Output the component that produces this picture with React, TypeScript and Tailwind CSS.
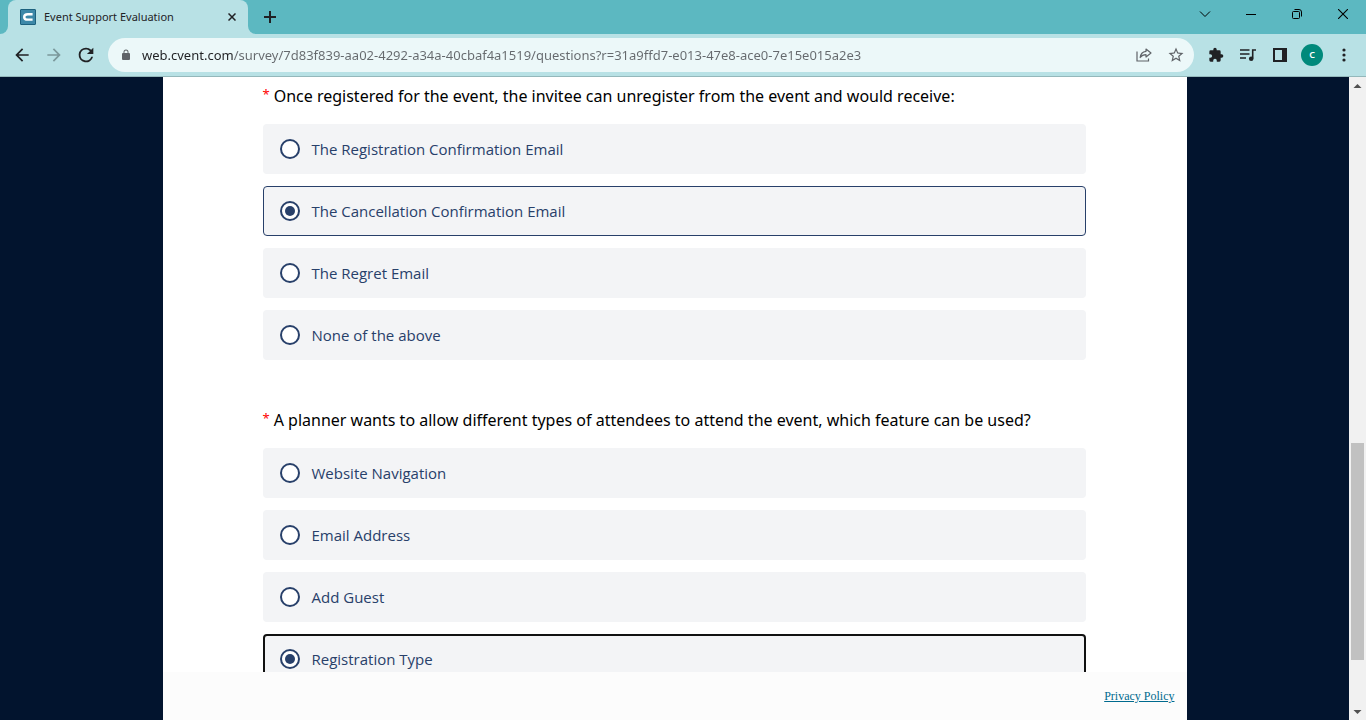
import React from "react";

type Question = {
  id: string;
  title: string;
  options: string[];
  selected: number;
  focused?: boolean;
};

const questions: Question[] = [
  {
    id: "unregister",
    title: "Once registered for the event, the invitee can unregister from the event and would receive:",
    options: [
      "The Registration Confirmation Email",
      "The Cancellation Confirmation Email",
      "The Regret Email",
      "None of the above",
    ],
    selected: 1,
  },
  {
    id: "attendee-types",
    title: "A planner wants to allow different types of attendees to attend the event, which feature can be used?",
    options: ["Website Navigation", "Email Address", "Add Guest", "Registration Type"],
    selected: 3,
    focused: true,
  },
];

function Icon({ d, className = "size-5" }: { d: string; className?: string }) {
  return (
    <svg viewBox="0 0 24 24" fill="currentColor" className={className} aria-hidden="true">
      <path d={d} />
    </svg>
  );
}

function ChromeButton({ label, className = "", children }: { label: string; className?: string; children: React.ReactNode }) {
  return (
    <button type="button" aria-label={label} className={`flex h-8 w-8 shrink-0 items-center justify-center ${className}`}>
      {children}
    </button>
  );
}

function TabStrip() {
  return (
    <div className="flex h-[34px] shrink-0 items-stretch bg-[#5cb8c1]">
      <div className="flex w-2 items-end bg-[#b8e1e5]">
        <div className="h-full w-full rounded-br-lg bg-[#5cb8c1]" />
      </div>
      <div className="flex w-60 items-center rounded-t-lg bg-[#b8e1e5] pr-2 pl-3">
        <svg viewBox="0 0 16 16" className="size-4 shrink-0" aria-hidden="true">
          <rect x="0.5" y="0.5" width="15" height="15" rx="0.5" fill="#3d88a8" stroke="#1d617e" />
          <path d="M12.6 5.2H7.8C5.6 5.2 4.200 6.200 4.200 7.900s1.400 2.700 3.600 2.700h4.800" fill="none" stroke="#fff" strokeWidth="2.400" />
        </svg>
        <span className="ml-2 flex-1 whitespace-nowrap text-[11px] leading-4 text-[#1f2326]">Event Support Evaluation</span>
        <button type="button" aria-label="Close tab" className="flex size-4 items-center justify-center text-[#202124]">
          <svg viewBox="0 0 8 8" className="size-2" aria-hidden="true">
            <path d="M.5.5l7 7M7.5.5l-7 7" stroke="currentColor" strokeWidth="1.5" />
          </svg>
        </button>
      </div>
      <div className="flex w-2 items-end bg-[#b8e1e5]">
        <div className="h-full w-full rounded-bl-lg bg-[#5cb8c1]" />
      </div>
      <button type="button" aria-label="New tab" className="flex w-7 items-center justify-center text-[#202124]">
        <svg viewBox="0 0 12 12" className="size-3" aria-hidden="true">
          <path d="M6 0v12M0 6h12" stroke="currentColor" strokeWidth="2" />
        </svg>
      </button>
      <div className="ml-auto flex h-7 text-black">
        <button type="button" aria-label="Search tabs" className="flex w-[46px] items-center justify-center">
          <svg viewBox="0 0 12 12" className="size-3" aria-hidden="true">
            <path d="M1 3.5l5 5 5-5" fill="none" stroke="currentColor" />
          </svg>
        </button>
        <button type="button" aria-label="Minimize" className="flex w-[46px] items-center justify-center">
          <svg viewBox="0 0 10 10" className="size-[10px]" aria-hidden="true">
            <path d="M0 5.5h10" stroke="currentColor" />
          </svg>
        </button>
        <button type="button" aria-label="Restore" className="flex w-[46px] items-center justify-center">
          <svg viewBox="0 0 10 10" className="size-[10px]" fill="none" stroke="currentColor" aria-hidden="true">
            <rect x="0.5" y="2.5" width="7" height="7" rx="1" />
            <path d="M2.5.5H7A2.5 2.5 0 0 1 9.5 3v4.5" />
          </svg>
        </button>
        <button type="button" aria-label="Close" className="flex w-[46px] items-center justify-center">
          <svg viewBox="0 0 10 10" className="size-[10px]" aria-hidden="true">
            <path d="M0 0l10 10M10 0L0 10" stroke="currentColor" strokeWidth="1.1" />
          </svg>
        </button>
      </div>
    </div>
  );
}

function Toolbar() {
  return (
    <div className="flex h-[43px] shrink-0 items-center border-b border-[#94b8bb] bg-[#b8e1e5] pr-[6px] pl-[6px] text-[#202124]">
      <ChromeButton label="Back">
        <Icon d="M20 11H7.830l5.590-5.590L12 4l-8 8 8 8 1.410-1.410L7.830 13H20z" />
      </ChromeButton>
      <ChromeButton label="Forward" className="text-[#7b989b]">
        <Icon d="M12 4l-1.410 1.410L16.170 11H4v2h12.170l-5.580 5.590L12 20l8-8z" />
      </ChromeButton>
      <ChromeButton label="Reload">
        <Icon d="M17.650 6.350A7.950 7.950 0 0 0 12 4a8 8 0 1 0 7.730 10h-2.080A6 6 0 1 1 12 6c1.660 0 3.140.69 4.220 1.780L13 11h7V4z" className="size-[22px]" />
      </ChromeButton>
      <div className="ml-[6px] flex h-[34px] min-w-0 flex-1 items-center rounded-full bg-[#ecf8f9] pr-[2px] pl-3 text-[#5f6368]">
        <Icon
          d="M18 8h-1V6A5 5 0 0 0 7 6v2H6a2 2 0 0 0-2 2v10a2 2 0 0 0 2 2h12a2 2 0 0 0 2-2V10a2 2 0 0 0-2-2zM8.900 8V6a3.100 3.100 0 0 1 6.200 0v2z"
          className="size-3 shrink-0"
        />
        <input
          type="text"
          aria-label="Address"
          defaultValue="web.cvent.com/survey/7d83f839-aa02-4292-a34a-40cbaf4a1519/questions?r=31a9ffd7-e013-47e8-ace0-7e15e015a2e3"
          className="ml-[10px] h-6 min-w-0 flex-1 bg-[linear-gradient(90deg,#202124_92px,#65696d_92px)] bg-clip-text text-[13px] text-transparent outline-none"
        />
        <ChromeButton label="Share">
          <svg viewBox="0 0 16 16" className="size-4" fill="none" stroke="currentColor" strokeWidth="1.2" aria-hidden="true">
            <path d="M1 4.500v9.500h11.500v-2.500" />
            <path d="M10 2l5 4-5 4V7.700c-2.500 0-4.400.8-5.800 2.800.3-3.200 2.300-5.700 5.800-6.200z" strokeLinejoin="round" />
          </svg>
        </ChromeButton>
        <ChromeButton label="Bookmark this page">
          <Icon
            d="M22 9.240l-7.190-.62L12 2 9.190 8.630 2 9.240l5.460 4.730L5.820 21 12 17.270 18.180 21l-1.630-7.030zM12 15.400l-3.760 2.270 1-4.280-3.320-2.880 4.380-.38L12 6.100l1.710 4.040 4.380.38-3.320 2.880 1 4.280z"
            className="size-[18px]"
          />
        </ChromeButton>
      </div>
      <ChromeButton label="Extensions" className="ml-[6px]">
        <Icon
          d="M20.500 11H19V7a2 2 0 0 0-2-2h-4V3.500a2.500 2.500 0 0 0-5 0V5H4a2 2 0 0 0-2 2v3.800h1.500a2.700 2.700 0 0 1 0 5.400H2V20a2 2 0 0 0 2 2h3.800v-1.500a2.700 2.700 0 0 1 5.400 0V22H17a2 2 0 0 0 2-2v-4h1.500a2.500 2.500 0 0 0 0-5z"
          className="size-4"
        />
      </ChromeButton>
      <ChromeButton label="Media controls">
        <svg viewBox="0 0 16 14" className="h-[14px] w-4" fill="none" stroke="currentColor" strokeWidth="1.6" aria-hidden="true">
          <path d="M0 2h9.500M0 6h9.500M0 10h6" />
          <path d="M12.700 10.500V2H16" />
          <circle cx="11.200" cy="10.700" r="2.300" fill="currentColor" stroke="none" />
        </svg>
      </ChromeButton>
      <ChromeButton label="Side panel">
        <svg viewBox="0 0 14 14" className="size-[14px]" aria-hidden="true">
          <path d="M1 1h12v12H1z" fill="none" stroke="currentColor" strokeWidth="2" />
          <path d="M9 1h4v12H9z" fill="currentColor" />
        </svg>
      </ChromeButton>
      <ChromeButton label="Profile">
        <span className="flex size-[22px] items-center justify-center rounded-full bg-[#00897b] text-[9px] leading-3 font-semibold text-white">C</span>
      </ChromeButton>
      <ChromeButton label="Menu">
        <svg viewBox="0 0 4 14" className="h-[14px] w-1" fill="currentColor" aria-hidden="true">
          <circle cx="2" cy="2" r="1.600" />
          <circle cx="2" cy="7" r="1.600" />
          <circle cx="2" cy="12" r="1.600" />
        </svg>
      </ChromeButton>
    </div>
  );
}

function QuestionBlock({ question }: { question: Question }) {
  return (
    <section role="radiogroup" aria-labelledby={question.id} className="shrink-0">
      <h2 id={question.id} className="mb-4 flex gap-1 whitespace-nowrap font-['Noto_Sans',sans-serif] text-[16px] leading-6 text-black">
        <span className="text-[13px] leading-5 text-[#f00]">*</span>
        {question.title}
      </h2>
      <div className="flex flex-col gap-3">
        {question.options.map((option, index) => {
          const checked = index === question.selected;
          const frame = !checked
            ? "border border-transparent px-4"
            : question.focused
              ? "border-2 border-[#111] px-[15px]"
              : "border border-[#28406a] px-4";
          return (
            <label
              key={option}
              className={`flex h-[50px] items-center gap-3 rounded bg-[#f3f4f6] text-[15px] text-[#28406a] ${frame}`}
            >
              <input
                type="radio"
                name={question.id}
                defaultChecked={checked}
                className="grid size-5 shrink-0 appearance-none place-content-center rounded-full border-2 border-[#28406a] bg-white before:size-[10px] before:rounded-full checked:before:bg-[#28406a]"
              />
              {option}
            </label>
          );
        })}
      </div>
    </section>
  );
}

function Scrollbar() {
  return (
    <div className="flex w-[17px] shrink-0 flex-col items-center bg-[#f1f1f1] text-[#505050]" aria-hidden="true">
      <svg viewBox="0 0 17 17" className="size-[17px] shrink-0" fill="currentColor">
        <path d="M8.500 7l4 4h-8z" />
      </svg>
      <div className="flex w-[13px] flex-1 flex-col">
        <div className="flex-[349]" />
        <div className="flex-[217] bg-[#c1c1c1]" />
        <div className="flex-[43]" />
      </div>
      <svg viewBox="0 0 17 17" className="size-[17px] shrink-0" fill="currentColor">
        <path d="M8.500 11l4-4h-8z" />
      </svg>
    </div>
  );
}

export default function App() {
  return (
    <div className="flex h-screen flex-col overflow-hidden font-['Noto_Sans',sans-serif]">
      <TabStrip />
      <Toolbar />
      <div className="flex min-h-0 flex-1">
        <div className="flex min-w-0 flex-1 justify-center bg-[#02142e]">
          <div className="flex w-full max-w-[1024px] flex-col bg-white">
            <main className="flex min-h-0 flex-1 flex-col gap-12 overflow-hidden pt-[7px] pr-[101px] pl-[100px] font-['Open_Sans',sans-serif]">
              {questions.map((question) => (
                <QuestionBlock key={question.id} question={question} />
              ))}
            </main>
            <footer className="flex h-12 shrink-0 items-center justify-end bg-[#fcfcfc] px-3">
              <a href="#privacy" className="font-['Liberation_Serif',serif] text-[12px] text-[#006a8e] underline">
                Privacy Policy
              </a>
            </footer>
          </div>
        </div>
        <Scrollbar />
      </div>
    </div>
  );
}
